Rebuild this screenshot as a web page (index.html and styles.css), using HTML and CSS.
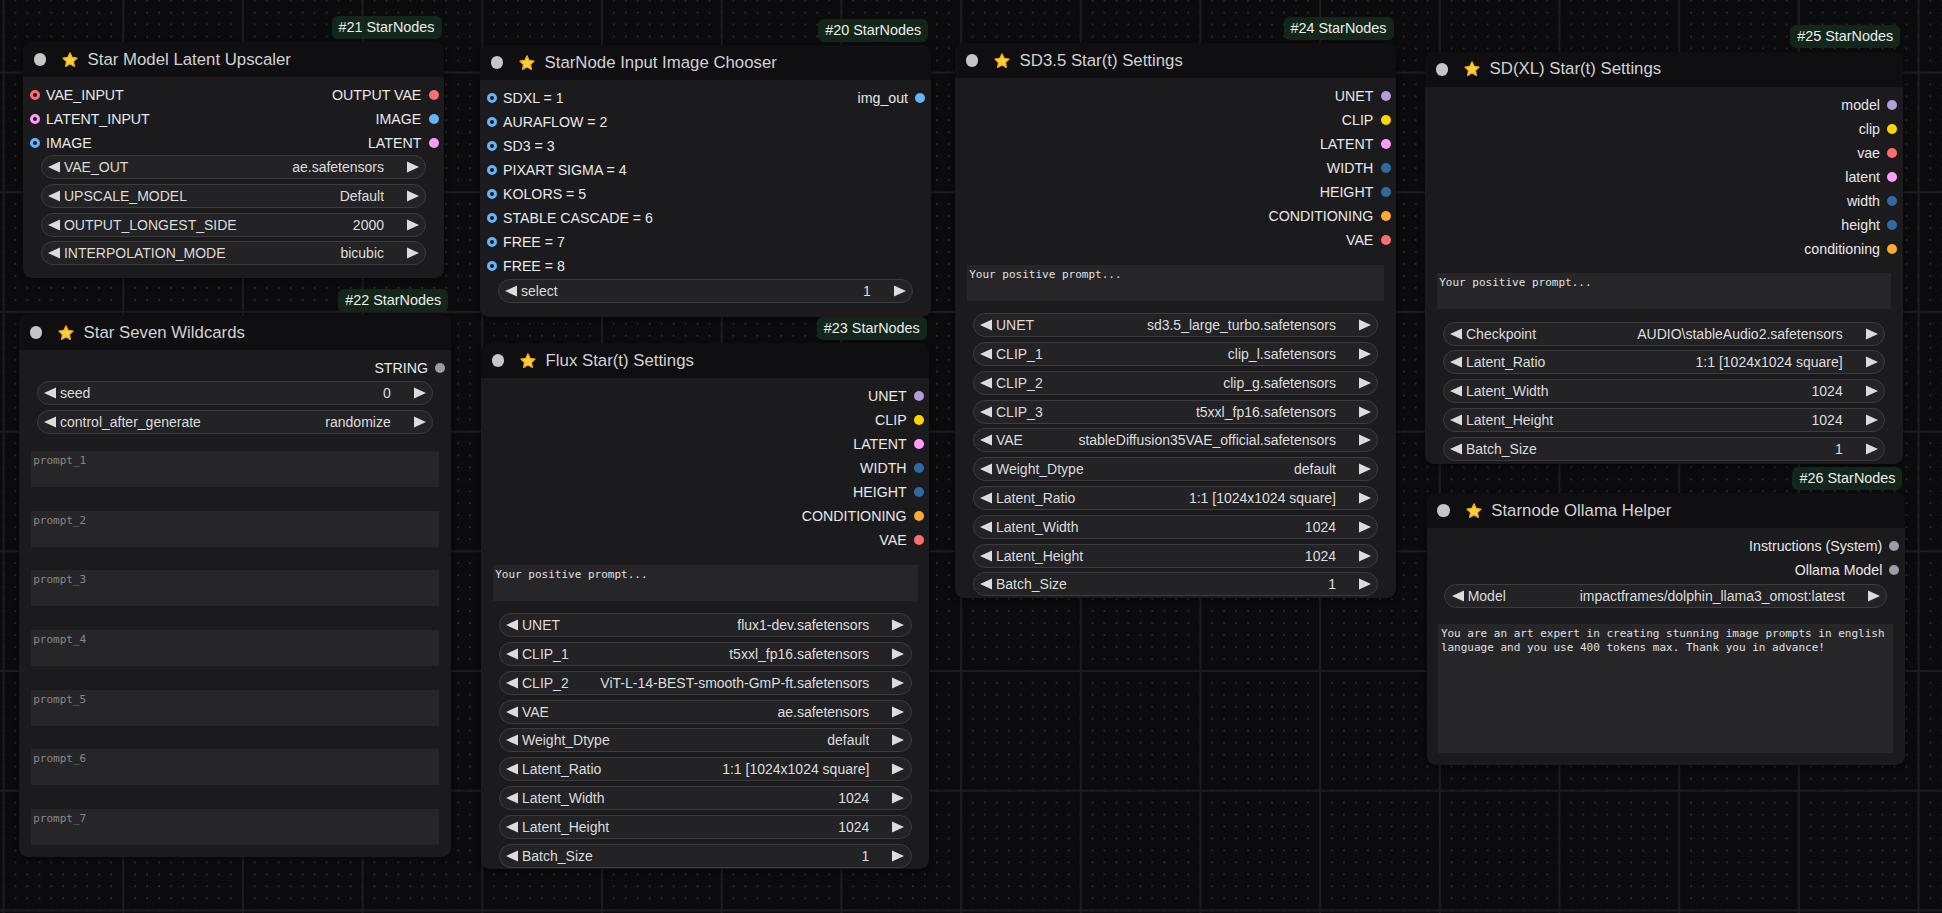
FILE: index.html
```html
<!DOCTYPE html>
<html lang="en">
<head>
<meta charset="utf-8">
<title>StarNodes graph</title>
<link rel="stylesheet" href="styles.css">
</head>
<body>
<div class="canvas">

  <!-- #21 -->
  <div class="node n21">
    <div class="badge">#21 StarNodes</div>
    <div class="title"><span class="collapse"></span><svg class="star" viewBox="0 0 24 24"><path d="M12 2.5l2.9 6 6.6.9-4.8 4.6 1.2 6.5L12 17.4l-5.9 3.1 1.2-6.5-4.8-4.6 6.6-.9z"/></svg><span class="title-text">Star Model Latent Upscaler</span></div>
    <div class="body">
      <div class="slot-row"><span class="slot-in"><i class="dot hollow c-vae"></i>VAE_INPUT</span><span class="slot-out">OUTPUT VAE<i class="dot c-vae"></i></span></div>
      <div class="slot-row"><span class="slot-in"><i class="dot hollow c-latent"></i>LATENT_INPUT</span><span class="slot-out">IMAGE<i class="dot c-image"></i></span></div>
      <div class="slot-row"><span class="slot-in"><i class="dot hollow c-image"></i>IMAGE</span><span class="slot-out">LATENT<i class="dot c-latent"></i></span></div>
      <div class="widgets">
        <div class="widget"><svg class="arr" viewBox="0 0 12 12"><polygon points="12,0.5 12,11.5 0,6"/></svg><span class="wl">VAE_OUT</span><span class="wv">ae.safetensors</span><svg class="arr" viewBox="0 0 12 12"><polygon points="0,0.5 0,11.5 12,6"/></svg></div>
        <div class="widget"><svg class="arr" viewBox="0 0 12 12"><polygon points="12,0.5 12,11.5 0,6"/></svg><span class="wl">UPSCALE_MODEL</span><span class="wv">Default</span><svg class="arr" viewBox="0 0 12 12"><polygon points="0,0.5 0,11.5 12,6"/></svg></div>
        <div class="widget"><svg class="arr" viewBox="0 0 12 12"><polygon points="12,0.5 12,11.5 0,6"/></svg><span class="wl">OUTPUT_LONGEST_SIDE</span><span class="wv">2000</span><svg class="arr" viewBox="0 0 12 12"><polygon points="0,0.5 0,11.5 12,6"/></svg></div>
        <div class="widget"><svg class="arr" viewBox="0 0 12 12"><polygon points="12,0.5 12,11.5 0,6"/></svg><span class="wl">INTERPOLATION_MODE</span><span class="wv">bicubic</span><svg class="arr" viewBox="0 0 12 12"><polygon points="0,0.5 0,11.5 12,6"/></svg></div>
      </div>
    </div>
  </div>

  <!-- #20 -->
  <div class="node n20">
    <div class="badge">#20 StarNodes</div>
    <div class="title"><span class="collapse"></span><svg class="star" viewBox="0 0 24 24"><path d="M12 2.5l2.9 6 6.6.9-4.8 4.6 1.2 6.5L12 17.4l-5.9 3.1 1.2-6.5-4.8-4.6 6.6-.9z"/></svg><span class="title-text">StarNode Input Image Chooser</span></div>
    <div class="body">
      <div class="slot-row"><span class="slot-in"><i class="dot hollow c-image"></i>SDXL = 1</span><span class="slot-out">img_out<i class="dot c-image"></i></span></div>
      <div class="slot-row"><span class="slot-in"><i class="dot hollow c-image"></i>AURAFLOW = 2</span></div>
      <div class="slot-row"><span class="slot-in"><i class="dot hollow c-image"></i>SD3 = 3</span></div>
      <div class="slot-row"><span class="slot-in"><i class="dot hollow c-image"></i>PIXART SIGMA = 4</span></div>
      <div class="slot-row"><span class="slot-in"><i class="dot hollow c-image"></i>KOLORS = 5</span></div>
      <div class="slot-row"><span class="slot-in"><i class="dot hollow c-image"></i>STABLE CASCADE = 6</span></div>
      <div class="slot-row"><span class="slot-in"><i class="dot hollow c-image"></i>FREE = 7</span></div>
      <div class="slot-row"><span class="slot-in"><i class="dot hollow c-image"></i>FREE = 8</span></div>
      <div class="widgets mt1">
        <div class="widget"><svg class="arr" viewBox="0 0 12 12"><polygon points="12,0.5 12,11.5 0,6"/></svg><span class="wl">select</span><span class="wv">1</span><svg class="arr" viewBox="0 0 12 12"><polygon points="0,0.5 0,11.5 12,6"/></svg></div>
      </div>
    </div>
  </div>

  <!-- #24 -->
  <div class="node n24">
    <div class="badge">#24 StarNodes</div>
    <div class="title"><span class="collapse"></span><svg class="star" viewBox="0 0 24 24"><path d="M12 2.5l2.9 6 6.6.9-4.8 4.6 1.2 6.5L12 17.4l-5.9 3.1 1.2-6.5-4.8-4.6 6.6-.9z"/></svg><span class="title-text">SD3.5 Star(t) Settings</span></div>
    <div class="body">
      <div class="slot-row"><span class="slot-out">UNET<i class="dot c-model"></i></span></div>
      <div class="slot-row"><span class="slot-out">CLIP<i class="dot c-clip"></i></span></div>
      <div class="slot-row"><span class="slot-out">LATENT<i class="dot c-latent"></i></span></div>
      <div class="slot-row"><span class="slot-out">WIDTH<i class="dot c-int"></i></span></div>
      <div class="slot-row"><span class="slot-out">HEIGHT<i class="dot c-int"></i></span></div>
      <div class="slot-row"><span class="slot-out">CONDITIONING<i class="dot c-cond"></i></span></div>
      <div class="slot-row"><span class="slot-out">VAE<i class="dot c-vae"></i></span></div>
      <div class="ta ta-short">Your positive prompt...</div>
      <div class="widgets mt-ta">
        <div class="widget"><svg class="arr" viewBox="0 0 12 12"><polygon points="12,0.5 12,11.5 0,6"/></svg><span class="wl">UNET</span><span class="wv">sd3.5_large_turbo.safetensors</span><svg class="arr" viewBox="0 0 12 12"><polygon points="0,0.5 0,11.5 12,6"/></svg></div>
        <div class="widget"><svg class="arr" viewBox="0 0 12 12"><polygon points="12,0.5 12,11.5 0,6"/></svg><span class="wl">CLIP_1</span><span class="wv">clip_l.safetensors</span><svg class="arr" viewBox="0 0 12 12"><polygon points="0,0.5 0,11.5 12,6"/></svg></div>
        <div class="widget"><svg class="arr" viewBox="0 0 12 12"><polygon points="12,0.5 12,11.5 0,6"/></svg><span class="wl">CLIP_2</span><span class="wv">clip_g.safetensors</span><svg class="arr" viewBox="0 0 12 12"><polygon points="0,0.5 0,11.5 12,6"/></svg></div>
        <div class="widget"><svg class="arr" viewBox="0 0 12 12"><polygon points="12,0.5 12,11.5 0,6"/></svg><span class="wl">CLIP_3</span><span class="wv">t5xxl_fp16.safetensors</span><svg class="arr" viewBox="0 0 12 12"><polygon points="0,0.5 0,11.5 12,6"/></svg></div>
        <div class="widget"><svg class="arr" viewBox="0 0 12 12"><polygon points="12,0.5 12,11.5 0,6"/></svg><span class="wl">VAE</span><span class="wv">stableDiffusion35VAE_official.safetensors</span><svg class="arr" viewBox="0 0 12 12"><polygon points="0,0.5 0,11.5 12,6"/></svg></div>
        <div class="widget"><svg class="arr" viewBox="0 0 12 12"><polygon points="12,0.5 12,11.5 0,6"/></svg><span class="wl">Weight_Dtype</span><span class="wv">default</span><svg class="arr" viewBox="0 0 12 12"><polygon points="0,0.5 0,11.5 12,6"/></svg></div>
        <div class="widget"><svg class="arr" viewBox="0 0 12 12"><polygon points="12,0.5 12,11.5 0,6"/></svg><span class="wl">Latent_Ratio</span><span class="wv">1:1 [1024x1024 square]</span><svg class="arr" viewBox="0 0 12 12"><polygon points="0,0.5 0,11.5 12,6"/></svg></div>
        <div class="widget"><svg class="arr" viewBox="0 0 12 12"><polygon points="12,0.5 12,11.5 0,6"/></svg><span class="wl">Latent_Width</span><span class="wv">1024</span><svg class="arr" viewBox="0 0 12 12"><polygon points="0,0.5 0,11.5 12,6"/></svg></div>
        <div class="widget"><svg class="arr" viewBox="0 0 12 12"><polygon points="12,0.5 12,11.5 0,6"/></svg><span class="wl">Latent_Height</span><span class="wv">1024</span><svg class="arr" viewBox="0 0 12 12"><polygon points="0,0.5 0,11.5 12,6"/></svg></div>
        <div class="widget"><svg class="arr" viewBox="0 0 12 12"><polygon points="12,0.5 12,11.5 0,6"/></svg><span class="wl">Batch_Size</span><span class="wv">1</span><svg class="arr" viewBox="0 0 12 12"><polygon points="0,0.5 0,11.5 12,6"/></svg></div>
      </div>
    </div>
  </div>

  <!-- #25 -->
  <div class="node n25">
    <div class="badge">#25 StarNodes</div>
    <div class="title"><span class="collapse"></span><svg class="star" viewBox="0 0 24 24"><path d="M12 2.5l2.9 6 6.6.9-4.8 4.6 1.2 6.5L12 17.4l-5.9 3.1 1.2-6.5-4.8-4.6 6.6-.9z"/></svg><span class="title-text">SD(XL) Star(t) Settings</span></div>
    <div class="body">
      <div class="slot-row"><span class="slot-out">model<i class="dot c-model"></i></span></div>
      <div class="slot-row"><span class="slot-out">clip<i class="dot c-clip"></i></span></div>
      <div class="slot-row"><span class="slot-out">vae<i class="dot c-vae"></i></span></div>
      <div class="slot-row"><span class="slot-out">latent<i class="dot c-latent"></i></span></div>
      <div class="slot-row"><span class="slot-out">width<i class="dot c-int"></i></span></div>
      <div class="slot-row"><span class="slot-out">height<i class="dot c-int"></i></span></div>
      <div class="slot-row"><span class="slot-out">conditioning<i class="dot c-cond"></i></span></div>
      <div class="ta ta-short">Your positive prompt...</div>
      <div class="widgets mt-ta">
        <div class="widget"><svg class="arr" viewBox="0 0 12 12"><polygon points="12,0.5 12,11.5 0,6"/></svg><span class="wl">Checkpoint</span><span class="wv">AUDIO\stableAudio2.safetensors</span><svg class="arr" viewBox="0 0 12 12"><polygon points="0,0.5 0,11.5 12,6"/></svg></div>
        <div class="widget"><svg class="arr" viewBox="0 0 12 12"><polygon points="12,0.5 12,11.5 0,6"/></svg><span class="wl">Latent_Ratio</span><span class="wv">1:1 [1024x1024 square]</span><svg class="arr" viewBox="0 0 12 12"><polygon points="0,0.5 0,11.5 12,6"/></svg></div>
        <div class="widget"><svg class="arr" viewBox="0 0 12 12"><polygon points="12,0.5 12,11.5 0,6"/></svg><span class="wl">Latent_Width</span><span class="wv">1024</span><svg class="arr" viewBox="0 0 12 12"><polygon points="0,0.5 0,11.5 12,6"/></svg></div>
        <div class="widget"><svg class="arr" viewBox="0 0 12 12"><polygon points="12,0.5 12,11.5 0,6"/></svg><span class="wl">Latent_Height</span><span class="wv">1024</span><svg class="arr" viewBox="0 0 12 12"><polygon points="0,0.5 0,11.5 12,6"/></svg></div>
        <div class="widget"><svg class="arr" viewBox="0 0 12 12"><polygon points="12,0.5 12,11.5 0,6"/></svg><span class="wl">Batch_Size</span><span class="wv">1</span><svg class="arr" viewBox="0 0 12 12"><polygon points="0,0.5 0,11.5 12,6"/></svg></div>
      </div>
    </div>
  </div>

  <!-- #26 -->
  <div class="node n26">
    <div class="badge">#26 StarNodes</div>
    <div class="title"><span class="collapse"></span><svg class="star" viewBox="0 0 24 24"><path d="M12 2.5l2.9 6 6.6.9-4.8 4.6 1.2 6.5L12 17.4l-5.9 3.1 1.2-6.5-4.8-4.6 6.6-.9z"/></svg><span class="title-text">Starnode Ollama Helper</span></div>
    <div class="body">
      <div class="slot-row"><span class="slot-out">Instructions (System)<i class="dot c-string"></i></span></div>
      <div class="slot-row"><span class="slot-out">Ollama Model<i class="dot c-string"></i></span></div>
      <div class="widgets mt2">
        <div class="widget"><svg class="arr" viewBox="0 0 12 12"><polygon points="12,0.5 12,11.5 0,6"/></svg><span class="wl">Model</span><span class="wv">impactframes/dolphin_llama3_omost:latest</span><svg class="arr" viewBox="0 0 12 12"><polygon points="0,0.5 0,11.5 12,6"/></svg></div>
      </div>
      <div class="ta ta-tall">You are an art expert in creating stunning image prompts in english<br>language and you use 400 tokens max. Thank you in advance!</div>
    </div>
  </div>

  <!-- #22 -->
  <div class="node n22">
    <div class="badge">#22 StarNodes</div>
    <div class="title"><span class="collapse"></span><svg class="star" viewBox="0 0 24 24"><path d="M12 2.5l2.9 6 6.6.9-4.8 4.6 1.2 6.5L12 17.4l-5.9 3.1 1.2-6.5-4.8-4.6 6.6-.9z"/></svg><span class="title-text">Star Seven Wildcards</span></div>
    <div class="body">
      <div class="slot-row"><span class="slot-out">STRING<i class="dot c-string"></i></span></div>
      <div class="widgets mt1">
        <div class="widget"><svg class="arr" viewBox="0 0 12 12"><polygon points="12,0.5 12,11.5 0,6"/></svg><span class="wl">seed</span><span class="wv">0</span><svg class="arr" viewBox="0 0 12 12"><polygon points="0,0.5 0,11.5 12,6"/></svg></div>
        <div class="widget"><svg class="arr" viewBox="0 0 12 12"><polygon points="12,0.5 12,11.5 0,6"/></svg><span class="wl">control_after_generate</span><span class="wv">randomize</span><svg class="arr" viewBox="0 0 12 12"><polygon points="0,0.5 0,11.5 12,6"/></svg></div>
      </div>
      <div class="prompts">
        <div class="ta ta-prompt placeholder">prompt_1</div>
        <div class="ta ta-prompt placeholder">prompt_2</div>
        <div class="ta ta-prompt placeholder">prompt_3</div>
        <div class="ta ta-prompt placeholder">prompt_4</div>
        <div class="ta ta-prompt placeholder">prompt_5</div>
        <div class="ta ta-prompt placeholder">prompt_6</div>
        <div class="ta ta-prompt placeholder">prompt_7</div>
      </div>
    </div>
  </div>

  <!-- #23 -->
  <div class="node n23">
    <div class="badge">#23 StarNodes</div>
    <div class="title"><span class="collapse"></span><svg class="star" viewBox="0 0 24 24"><path d="M12 2.5l2.9 6 6.6.9-4.8 4.6 1.2 6.5L12 17.4l-5.9 3.1 1.2-6.5-4.8-4.6 6.6-.9z"/></svg><span class="title-text">Flux Star(t) Settings</span></div>
    <div class="body">
      <div class="slot-row"><span class="slot-out">UNET<i class="dot c-model"></i></span></div>
      <div class="slot-row"><span class="slot-out">CLIP<i class="dot c-clip"></i></span></div>
      <div class="slot-row"><span class="slot-out">LATENT<i class="dot c-latent"></i></span></div>
      <div class="slot-row"><span class="slot-out">WIDTH<i class="dot c-int"></i></span></div>
      <div class="slot-row"><span class="slot-out">HEIGHT<i class="dot c-int"></i></span></div>
      <div class="slot-row"><span class="slot-out">CONDITIONING<i class="dot c-cond"></i></span></div>
      <div class="slot-row"><span class="slot-out">VAE<i class="dot c-vae"></i></span></div>
      <div class="ta ta-short">Your positive prompt...</div>
      <div class="widgets mt-ta">
        <div class="widget"><svg class="arr" viewBox="0 0 12 12"><polygon points="12,0.5 12,11.5 0,6"/></svg><span class="wl">UNET</span><span class="wv">flux1-dev.safetensors</span><svg class="arr" viewBox="0 0 12 12"><polygon points="0,0.5 0,11.5 12,6"/></svg></div>
        <div class="widget"><svg class="arr" viewBox="0 0 12 12"><polygon points="12,0.5 12,11.5 0,6"/></svg><span class="wl">CLIP_1</span><span class="wv">t5xxl_fp16.safetensors</span><svg class="arr" viewBox="0 0 12 12"><polygon points="0,0.5 0,11.5 12,6"/></svg></div>
        <div class="widget"><svg class="arr" viewBox="0 0 12 12"><polygon points="12,0.5 12,11.5 0,6"/></svg><span class="wl">CLIP_2</span><span class="wv">ViT-L-14-BEST-smooth-GmP-ft.safetensors</span><svg class="arr" viewBox="0 0 12 12"><polygon points="0,0.5 0,11.5 12,6"/></svg></div>
        <div class="widget"><svg class="arr" viewBox="0 0 12 12"><polygon points="12,0.5 12,11.5 0,6"/></svg><span class="wl">VAE</span><span class="wv">ae.safetensors</span><svg class="arr" viewBox="0 0 12 12"><polygon points="0,0.5 0,11.5 12,6"/></svg></div>
        <div class="widget"><svg class="arr" viewBox="0 0 12 12"><polygon points="12,0.5 12,11.5 0,6"/></svg><span class="wl">Weight_Dtype</span><span class="wv">default</span><svg class="arr" viewBox="0 0 12 12"><polygon points="0,0.5 0,11.5 12,6"/></svg></div>
        <div class="widget"><svg class="arr" viewBox="0 0 12 12"><polygon points="12,0.5 12,11.5 0,6"/></svg><span class="wl">Latent_Ratio</span><span class="wv">1:1 [1024x1024 square]</span><svg class="arr" viewBox="0 0 12 12"><polygon points="0,0.5 0,11.5 12,6"/></svg></div>
        <div class="widget"><svg class="arr" viewBox="0 0 12 12"><polygon points="12,0.5 12,11.5 0,6"/></svg><span class="wl">Latent_Width</span><span class="wv">1024</span><svg class="arr" viewBox="0 0 12 12"><polygon points="0,0.5 0,11.5 12,6"/></svg></div>
        <div class="widget"><svg class="arr" viewBox="0 0 12 12"><polygon points="12,0.5 12,11.5 0,6"/></svg><span class="wl">Latent_Height</span><span class="wv">1024</span><svg class="arr" viewBox="0 0 12 12"><polygon points="0,0.5 0,11.5 12,6"/></svg></div>
        <div class="widget"><svg class="arr" viewBox="0 0 12 12"><polygon points="12,0.5 12,11.5 0,6"/></svg><span class="wl">Batch_Size</span><span class="wv">1</span><svg class="arr" viewBox="0 0 12 12"><polygon points="0,0.5 0,11.5 12,6"/></svg></div>
      </div>
    </div>
  </div>

</div>
</body>
</html>
```

FILE: styles.css
```css
* { box-sizing: border-box; }
html, body { margin: 0; padding: 0; }
body {
  background: #0b0b0d;
  font-family: "Liberation Sans", Arial, sans-serif;
}

.canvas {
  position: relative;
  width: 1942px;
  height: 913px;
  overflow: hidden;
  background-color: #0b0b0d;
  background-image:
    linear-gradient(to right, #1c1d21 2px, transparent 2px),
    linear-gradient(to bottom, #1c1d21 2px, transparent 2px),
    radial-gradient(circle, #27282c 0.9px, transparent 1.3px);
  background-size: 119.7px 119.7px, 119.7px 119.7px, 11.97px 11.97px;
  background-position: 2.6px 0, 0 71.6px, -2.6px -5.4px;
}

/* ---------- node frame ---------- */
.node {
  position: absolute;
  background: #1b1b1d;
  border-radius: 9px;
  display: flex;
  flex-direction: column;
  box-shadow: 0 2px 6px rgba(0, 0, 0, 0.45);
}
.n21 { left: 23px;     top: 42px;    width: 421px;   height: 236px; }
.n20 { left: 480px;    top: 45px;    width: 450.7px; height: 272px; }
.n24 { left: 955px;    top: 43.3px;  width: 441px;   height: 555px; }
.n25 { left: 1425px;   top: 51.7px;  width: 477.7px; height: 412.3px; }
.n26 { left: 1426.7px; top: 493.3px; width: 478.3px; height: 271.7px; }
.n22 { left: 19px;     top: 315px;   width: 431.7px; height: 541.7px; }
.n23 { left: 481px;    top: 343.3px; width: 448.3px; height: 526px; }

.badge {
  position: absolute;
  right: 2.5px;
  bottom: calc(100% + 3.3px);
  height: 23px;
  padding: 0 7px;
  background: #13261a;
  color: #ececec;
  font-size: 14.4px;
  line-height: 23px;
  border-radius: 6px;
  white-space: nowrap;
}

.title {
  height: 35px;
  flex: none;
  background: #0f0f11;
  border-radius: 9px 9px 0 0;
  display: flex;
  align-items: center;
  padding-left: 10.6px;
}
.collapse {
  width: 12.7px;
  height: 12.7px;
  border-radius: 50%;
  background: #c6c6c6;
  flex: none;
}
.star {
  width: 18px;
  height: 18px;
  margin-left: 14.8px;
  flex: none;
}
.star path {
  fill: #fdd13c;
  stroke: #f0a91e;
  stroke-width: 1.6;
  stroke-linejoin: round;
}
.title-text {
  margin-left: 8.5px;
  font-size: 16.8px;
  color: #d2d2d2;
  white-space: nowrap;
}

.body {
  display: flex;
  flex-direction: column;
  padding-top: 6px;
}

/* ---------- slots ---------- */
.slot-row {
  height: 24px;
  flex: none;
  display: flex;
  align-items: center;
  justify-content: space-between;
  font-size: 14.2px;
  color: #e8e8e8;
  white-space: nowrap;
}
.slot-in {
  display: flex;
  align-items: center;
  padding-left: 6.7px;
}
.slot-in .dot { margin-right: 6.3px; }
.slot-out {
  display: flex;
  align-items: center;
  margin-left: auto;
  padding-right: 5.5px;
}
.slot-out .dot { margin-left: 7.2px; }

.dot {
  display: block;
  width: 10px;
  height: 10px;
  border-radius: 50%;
  background: currentColor;
  flex: none;
}
.dot.hollow {
  border: 3px solid currentColor;
  background: #1b1b1d;
}
.c-vae    { color: #ff6e6e; }
.c-latent { color: #ff9cf9; }
.c-image  { color: #64b5f6; }
.c-model  { color: #b39ddb; }
.c-clip   { color: #ffd500; }
.c-int    { color: #2e6ba3; }
.c-cond   { color: #ffa931; }
.c-string { color: #9c9ca6; }

/* ---------- combo widgets ---------- */
.widgets {
  display: flex;
  flex-direction: column;
  gap: 4.8px;
  padding: 0 17.7px;
}
.mt1 { margin-top: 1px; }
.mt2 { margin-top: 1.7px; }
.mt-ta { margin-top: 12.5px; }

.widget {
  height: 24px;
  border-radius: 12px;
  background: #232325;
  border: 1px solid #3c3c3f;
  display: flex;
  align-items: center;
  padding: 0 6.3px;
  font-size: 14px;
  color: #dcdcdc;
  white-space: nowrap;
}
.arr {
  width: 12px;
  height: 12px;
  flex: none;
  fill: #dcdcdc;
}
.wl {
  margin-left: 4px;
  flex: none;
}
.wv {
  margin-left: auto;
  margin-right: 23px;
  padding-left: 12px;
  overflow: hidden;
  color: #dedede;
}

/* ---------- text areas ---------- */
.ta {
  margin: 0 11.7px;
  background: #262628;
  font-family: "DejaVu Sans Mono", "Liberation Mono", monospace;
  font-size: 11px;
  line-height: 14.3px;
  padding: 3px 2.5px;
  color: #e0e0e0;
  white-space: nowrap;
  overflow: hidden;
}
.ta-short { margin-top: 12.7px; height: 35.7px; }
.ta-tall  { margin-top: 16px; height: 128.7px; }
.ta.placeholder { color: #888888; }

.prompts {
  display: flex;
  flex-direction: column;
  gap: 23.7px;
  margin-top: 17.2px;
}
.ta-prompt { height: 36px; }
```
